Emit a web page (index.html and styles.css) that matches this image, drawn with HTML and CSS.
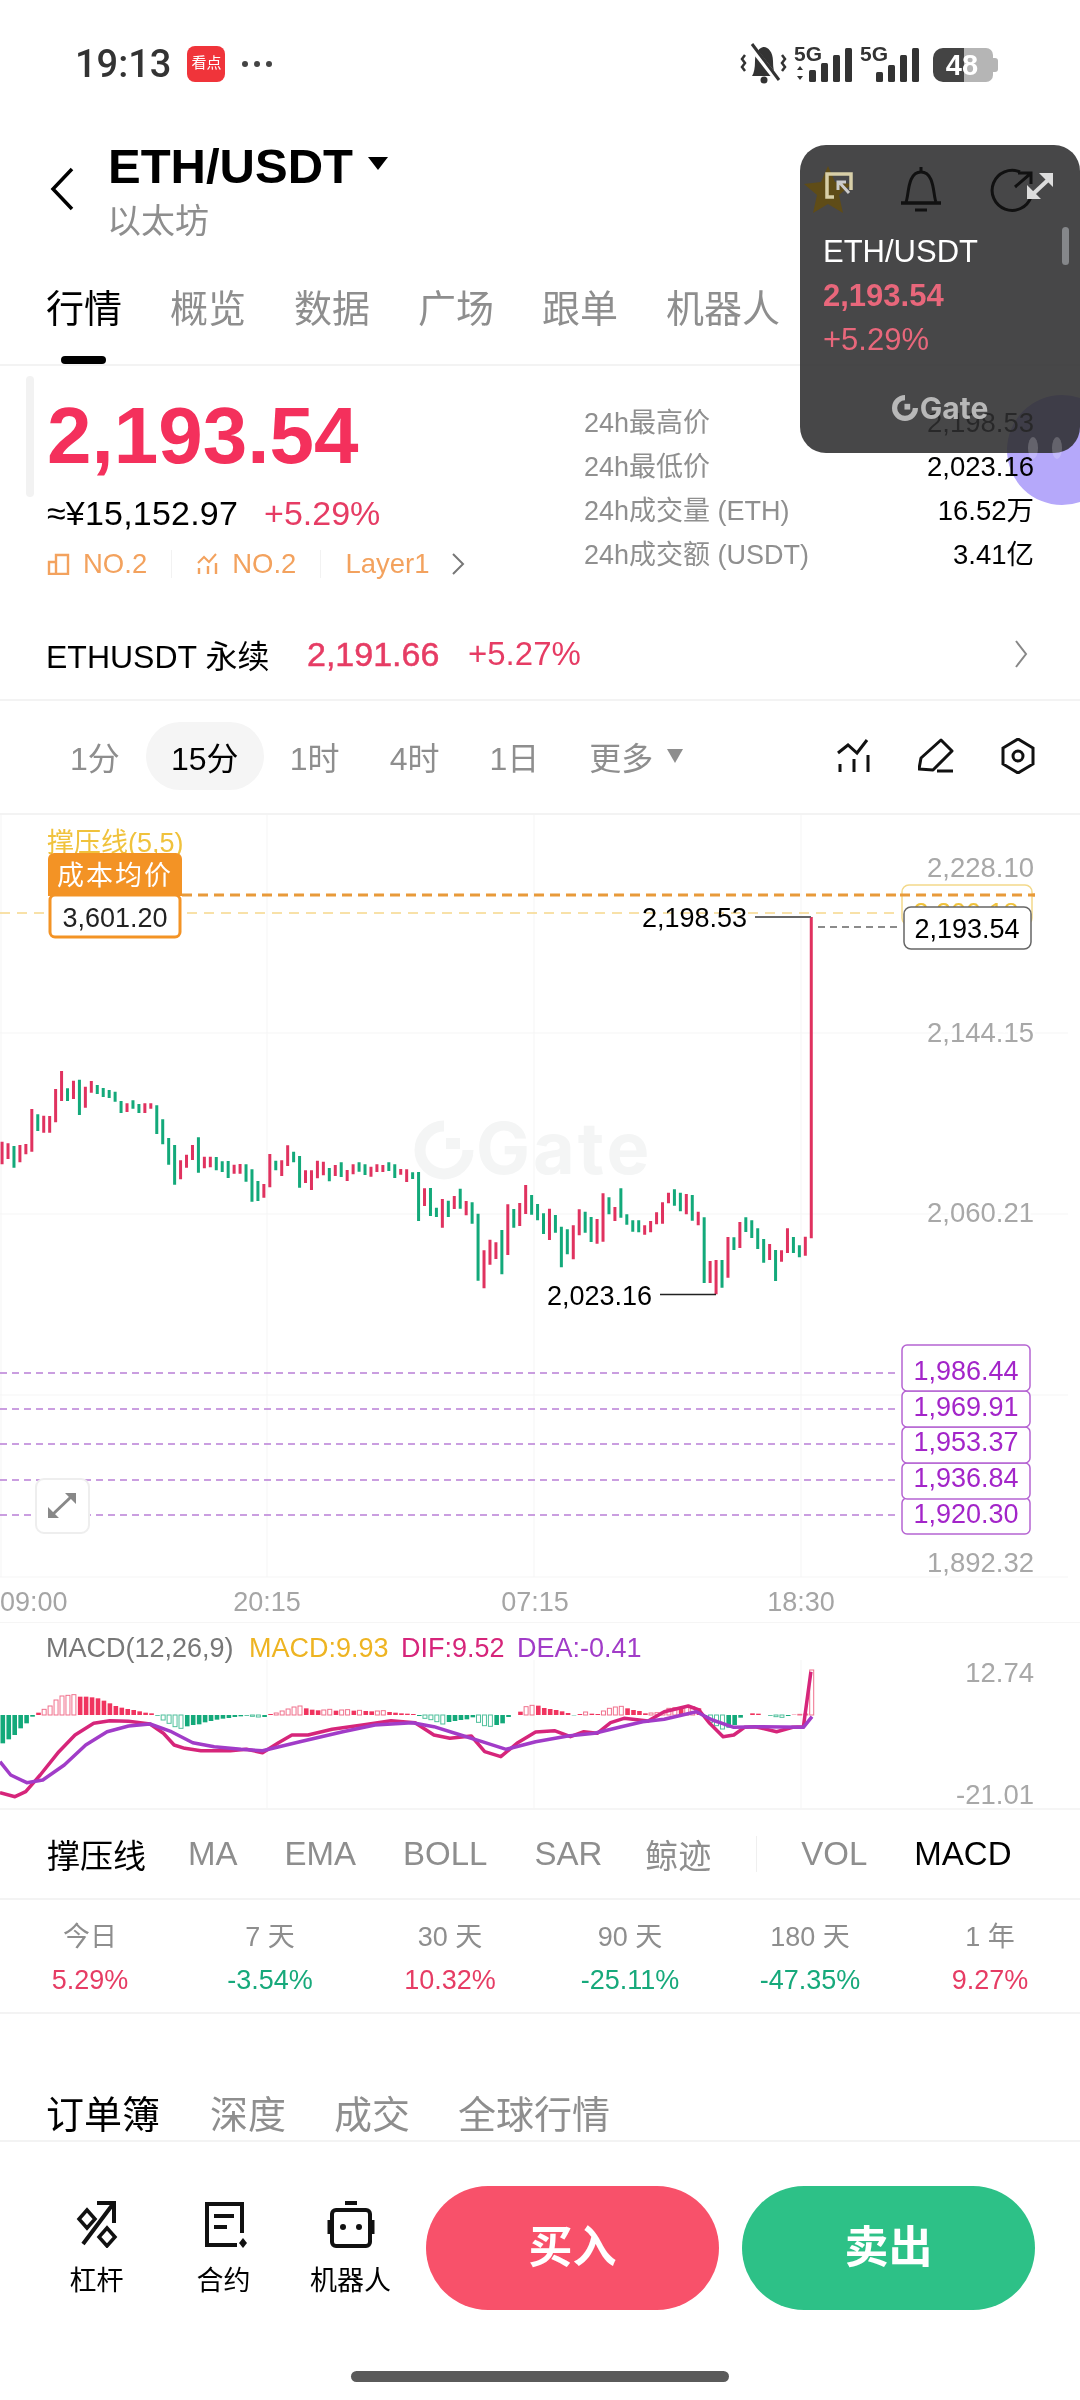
FILE: index.html
```html
<!DOCTYPE html>
<html lang="zh-CN">
<head>
    <meta charset="UTF-8">
    <meta name="viewport" content="width=device-width, initial-scale=1.0">
    <title>ETH/USDT</title>
    <link rel="stylesheet" href="styles.css">
</head>
<body>
<div class="page">
    <div class="status">
        <span class="clock">19:13</span>
        <span class="app-badge">看点</span>
        <span class="status-dots"><i></i><i></i><i></i></span>
        <svg class="status-right" viewBox="740 40 260 48">
            <path d="M752 76c2-3 3-8 3-15 0-9 5-14 9-14s9 5 9 14c0 7 1 12 3 15z" fill="#333"/>
            <circle cx="764" cy="80" r="3.5" fill="#333"/>
            <path d="M750 45l29 37" stroke="#fff" stroke-width="6"/>
            <path d="M752 44l27 36" stroke="#333" stroke-width="3"/>
            <path d="M745 55l-3 4 3 4-3 4 3 4M782 55l3 4-3 4 3 4-3 4" fill="none" stroke="#333" stroke-width="2.5"/>
            <text class="five-g" x="794" y="61">5G</text>
            <path d="M797 70l3-4 3 4zM797 76l3 4 3-4z" fill="#333"/>
            <g fill="#333">
                <rect x="809" y="70" width="7" height="12" rx="1.5"/>
                <rect x="821" y="63" width="7" height="19" rx="1.5"/>
                <rect x="833" y="55" width="7" height="27" rx="1.5"/>
                <rect x="845" y="48" width="7" height="34" rx="1.5"/>
            </g>
            <text class="five-g" x="860" y="61">5G</text>
            <g fill="#333">
                <rect x="876" y="72" width="7" height="10" rx="1.5"/>
                <rect x="888" y="65" width="7" height="17" rx="1.5"/>
                <rect x="900" y="55" width="7" height="27" rx="1.5"/>
                <rect x="912" y="48" width="7" height="34" rx="1.5"/>
            </g>
            <path d="M943 48h43a7 7 0 0 1 7 7v20a7 7 0 0 1-7 7h-43z" fill="#b5b5b5"/>
            <path d="M993 58h2a3 3 0 0 1 3 3v8a3 3 0 0 1-3 3h-2z" fill="#b5b5b5"/>
            <path d="M964 48h-21a10 10 0 0 0-10 10v14a10 10 0 0 0 10 10h21z" fill="#444"/>
            <text class="battery-num" x="962" y="75">48</text>
        </svg>
    </div>

    <div class="header">
        <svg class="back" viewBox="0 0 24 44"><path d="M22 2L3 22l19 20" fill="none" stroke="#000" stroke-width="3.5"/></svg>
        <div>
            <div class="pair-row"><span class="pair">ETH/USDT</span><span class="caret"></span></div>
            <div class="pair-name">以太坊</div>
        </div>
    </div>

    <div class="tabs">
        <span class="tab active">行情</span>
        <span class="tab">概览</span>
        <span class="tab">数据</span>
        <span class="tab">广场</span>
        <span class="tab">跟单</span>
        <span class="tab">机器人</span>
    </div>

    <div class="quote">
        <div class="quote-left">
            <div class="price">2,193.54</div>
            <div class="price-sub"><span class="cny">≈¥15,152.97</span><span class="up">+5.29%</span></div>
            <div class="ranks">
                <svg class="rank-icon" viewBox="0 0 24 22"><path d="M2 21V9h7v12zM9 21V2h12v19z" fill="none" stroke="#f3a25e" stroke-width="2.4"/></svg>
                <span>NO.2</span>
                <i class="rank-sep"></i>
                <svg class="rank-icon" viewBox="0 0 24 22"><path d="M2 10l6-6 5 5 7-8" fill="none" stroke="#f3a25e" stroke-width="2"/><path d="M3 21v-6M12 21v-8M20 21v-11" stroke="#f3a25e" stroke-width="2.4"/></svg>
                <span>NO.2</span>
                <i class="rank-sep"></i>
                <span>Layer1</span>
                <svg class="rank-more" viewBox="0 0 14 24"><path d="M2 2l10 10L2 22" fill="none" stroke="#777" stroke-width="2"/></svg>
            </div>
        </div>
        <div class="stats">
            <div class="stat"><span>24h最高价</span><b>2,198.53</b></div>
            <div class="stat"><span>24h最低价</span><b>2,023.16</b></div>
            <div class="stat"><span>24h成交量 (ETH)</span><b>16.52万</b></div>
            <div class="stat"><span>24h成交额 (USDT)</span><b>3.41亿</b></div>
        </div>
    </div>

    <div class="perp">
        <span class="perp-name">ETHUSDT 永续</span>
        <span class="perp-price">2,191.66</span>
        <span class="perp-pct">+5.27%</span>
        <svg class="perp-more" viewBox="0 0 14 30"><path d="M2 2l10 13L2 28" fill="none" stroke="#888" stroke-width="2"/></svg>
    </div>

    <div class="periods">
        <span class="period p1">1分</span>
        <span class="period p15">15分</span>
        <span class="period">1时</span>
        <span class="period">4时</span>
        <span class="period">1日</span>
        <span class="period more">更多<i class="more-caret"></i></span>
        <div class="tools">
            <svg viewBox="0 0 36 36"><path d="M2 15l10-8 9 8 10-13" fill="none" stroke="#111" stroke-width="3"/><path d="M4 34v-8M18 34v-13M32 34V17" stroke="#111" stroke-width="3"/></svg>
            <svg viewBox="0 0 36 36"><path d="M1 31l2-11L23 2l11 11-19 19z" fill="none" stroke="#111" stroke-width="3" stroke-linejoin="round"/><path d="M19 33h16" stroke="#111" stroke-width="3"/></svg>
            <svg viewBox="0 0 36 36"><path d="M18 1l15 9v16l-15 9-15-9V10z" fill="none" stroke="#111" stroke-width="3"/><circle cx="18" cy="18" r="5" fill="none" stroke="#111" stroke-width="3"/></svg>
        </div>
    </div>

    <svg class="chart" viewBox="0 815 1080 808">
        <g class="grid">
            <path d="M1 815V1577M267 815V1577M534 815V1577M801 815V1577"/>
            <path d="M0 1033H1068M0 1214H1068M0 1395H1068M0 1577H1068"/>
            <path d="M0 1622.5H1080"/>
        </g>
        <g class="watermark">
            <path d="M444 1126A24 24 0 1 0 468 1150" fill="none" stroke="#f4f5f5" stroke-width="11"/>
            <rect x="446" y="1138" width="14" height="11" fill="#f4f5f5"/>
            <text x="476" y="1174">Gate</text>
        </g>
        <path id="candles-up" class="candle-up"/>
        <path id="candles-down" class="candle-down"/>

        <text class="legend-yellow" x="47" y="852">撑压线(5,5)</text>
        <path class="dash-yellow" d="M0 913H900"/>
        <path class="dash-orange" d="M182 895H1035"/>
        <rect class="ytag" x="902" y="885" width="130" height="40" rx="7"/>
        <text class="ytag-text" x="966" y="922">2,200.18</text>
        <path class="dash-orange" d="M900 895H1035"/>

        <text class="axis" x="1034" y="877">2,228.10</text>
        <text class="axis" x="1034" y="1042">2,144.15</text>
        <text class="axis" x="1034" y="1222">2,060.21</text>
        <text class="axis" x="1034" y="1572">1,892.32</text>

        <text class="mark" x="642" y="927">2,198.53</text>
        <path class="mark-line" d="M755 917H811"/>
        <text class="mark" x="547" y="1305">2,023.16</text>
        <path class="mark-line-dark" d="M660 1294.5H716"/>

        <path class="dash-last" d="M818 927H900"/>
        <rect class="last-tag" x="904" y="907" width="127" height="42" rx="7"/>
        <text class="last-text" x="967" y="938">2,193.54</text>

        <path class="cost-head" d="M48 896v-37a6 6 0 0 1 6-6h122a6 6 0 0 1 6 6v37z"/>
        <text class="cost-title" x="115" y="885">成本均价</text>
        <rect class="cost-body" x="50" y="895" width="130" height="42" rx="5"/>
        <text class="cost-value" x="115" y="927">3,601.20</text>

        <g class="dash-purple">
            <path d="M0 1373H900M0 1409H900M0 1444H900M0 1480H900M0 1515H900"/>
        </g>
        <g class="ptags">
            <rect x="902" y="1498" width="128" height="36" rx="5"/>
            <rect x="902" y="1463" width="128" height="36" rx="5"/>
            <rect x="902" y="1427" width="128" height="36" rx="5"/>
            <rect x="902" y="1391" width="128" height="36" rx="5"/>
            <rect x="902" y="1345" width="128" height="46" rx="5"/>
        </g>
        <g class="ptexts">
            <text x="966" y="1380">1,986.44</text>
            <text x="966" y="1416">1,969.91</text>
            <text x="966" y="1451">1,953.37</text>
            <text x="966" y="1487">1,936.84</text>
            <text x="966" y="1523">1,920.30</text>
        </g>

        <rect class="expand" x="36" y="1479" width="53" height="54" rx="8"/>
        <path d="M51 1516L73 1495" stroke="#888" stroke-width="3"/>
        <path d="M76 1493v11l-11-11zM48 1518v-11l11 11z" fill="#888"/>

        <g class="times">
            <text x="0" y="1611">09:00</text>
            <text class="mid" x="267" y="1611">20:15</text>
            <text class="mid" x="535" y="1611">07:15</text>
            <text class="mid" x="801" y="1611">18:30</text>
        </g>
    </svg>

    <svg class="macd" viewBox="0 1623 1080 185">
        <path class="grid-line" d="M267 1660V1808M534 1660V1808M801 1660V1808"/>
        <text class="macd-legend" y="1657">
            <tspan class="l-gray" x="46">MACD(12,26,9)</tspan>
            <tspan class="l-yellow" x="249">MACD:9.93</tspan>
            <tspan class="l-pink" x="401">DIF:9.52</tspan>
            <tspan class="l-purple" x="517">DEA:-0.41</tspan>
        </text>
        <g id="histogram"></g>
        <path id="dif-line" class="dif"/>
        <path id="dea-line" class="dea"/>
        <text class="axis" x="1034" y="1682">12.74</text>
        <text class="axis" x="1034" y="1804">-21.01</text>
    </svg>

    <div class="indicators">
        <span class="ind on first">撑压线</span>
        <span class="ind">MA</span>
        <span class="ind">EMA</span>
        <span class="ind">BOLL</span>
        <span class="ind sar">SAR</span>
        <span class="ind">鲸迹</span>
        <i class="ind-sep"></i>
        <span class="ind">VOL</span>
        <span class="ind on">MACD</span>
    </div>

    <div class="returns">
        <div class="ret"><span>今日</span><b class="up">5.29%</b></div>
        <div class="ret"><span>7 天</span><b class="down">-3.54%</b></div>
        <div class="ret"><span>30 天</span><b class="up">10.32%</b></div>
        <div class="ret"><span>90 天</span><b class="down">-25.11%</b></div>
        <div class="ret"><span>180 天</span><b class="down">-47.35%</b></div>
        <div class="ret"><span>1 年</span><b class="up">9.27%</b></div>
    </div>

    <div class="book-tabs">
        <span class="on">订单簿</span>
        <span>深度</span>
        <span>成交</span>
        <span>全球行情</span>
    </div>

    <div class="actions">
        <div class="action">
            <svg viewBox="0 0 48 48"><path d="M10 44L40 4M24 3h17v20" fill="none" stroke="#111" stroke-width="4"/><path d="M14 10l8 9-8 9-8-9zM34 28l8 9-8 9-8-9z" fill="none" stroke="#111" stroke-width="3.5"/></svg>
            <span>杠杆</span>
        </div>
        <div class="action">
            <svg viewBox="0 0 48 48"><path d="M42 33V4H7v41h30" fill="none" stroke="#111" stroke-width="4"/><path d="M14 16h20M14 27h13" stroke="#111" stroke-width="4"/><path d="M43 38l4 5-4 5-4-5z" fill="#111"/></svg>
            <span>合约</span>
        </div>
        <div class="action">
            <svg viewBox="0 0 48 48"><rect x="5" y="10" width="38" height="36" rx="4" fill="none" stroke="#111" stroke-width="4"/><path d="M18 3h12" stroke="#111" stroke-width="4"/><path d="M2 20v14M46 20v14" stroke="#111" stroke-width="3"/><circle cx="16" cy="27" r="3" fill="#111"/><circle cx="32" cy="27" r="3" fill="#111"/></svg>
            <span>机器人</span>
        </div>
        <div class="trade buy">买入</div>
        <div class="trade sell">卖出</div>
    </div>

    <div class="home-bar"></div>

    <svg class="blob" viewBox="0 0 73 110"><circle cx="55" cy="55" r="55" fill="#b5a8fa"/></svg>

    <div class="float-win">
        <svg class="float-icons" viewBox="800 145 280 85">
            <path d="M828 166l7 16 17 2-13 11 4 18-15-9-15 9 4-18-13-11 17-2z" fill="#5f4c17"/>
            <path d="M834 197h-7v-23h24v16" fill="none" stroke="#d8cfa8" stroke-width="3.5"/>
            <path d="M839 182l10 11M838 190v-8h8" fill="none" stroke="#ccc" stroke-width="3"/>
            <path d="M906 202c3-6 1-30 15-30s12 24 15 30" fill="none" stroke="#111" stroke-width="3"/>
            <path d="M901 203h40" stroke="#111" stroke-width="3.5"/>
            <path d="M915 210h12" stroke="#111" stroke-width="3"/>
            <path d="M921 172v-5" stroke="#111" stroke-width="3"/>
            <path d="M1020 172A20 20 0 1 0 1031 197" fill="none" stroke="#111" stroke-width="3"/>
            <path d="M1015 187l15-13M1018 173h13v11" fill="none" stroke="#111" stroke-width="3"/>
            <path d="M1033 194l15-14" stroke="#ddd" stroke-width="4"/>
            <path d="M1053 173v14l-14-14zM1027 199v-14l14 14z" fill="#ddd"/>
        </svg>
        <div class="float-pair">ETH/USDT</div>
        <div class="float-price">2,193.54</div>
        <div class="float-pct">+5.29%</div>
        <div class="float-logo">
            <svg viewBox="0 0 100 100"><path d="M50 10A40 40 0 1 0 90 50" fill="none" stroke="#b8b8b8" stroke-width="20"/><rect x="48" y="34" width="22" height="22" fill="#b8b8b8"/></svg>
            <span>Gate</span>
        </div>
        <i class="float-scroll"></i>
    </div>
    <svg class="blob-eyes" viewBox="0 0 40 22"><ellipse cx="5" cy="11" rx="5" ry="11" fill="#fff" opacity=".2"/><ellipse cx="29" cy="11" rx="5" ry="11" fill="#fff" opacity=".2"/></svg>
</div>
<script src="chart.js"></script>
</body>
</html>
```

FILE: styles.css
```css
* {
    box-sizing: border-box;
}
body {
    margin: 0;
    background: #fff;
    font-family: "Liberation Sans", "Noto Sans CJK SC", sans-serif;
    color: #000;
}
i {
    font-style: normal;
}
.page {
    position: relative;
    width: 1080px;
    height: 2400px;
    overflow: hidden;
    background: #fff;
}

/* status bar */
.status {
    height: 128px;
    display: flex;
    align-items: center;
    padding-left: 75px;
}
.clock {
    font-family: Roboto, sans-serif;
    font-size: 38px;
    font-weight: 500;
    color: #333;
}
.app-badge {
    width: 38px;
    height: 36px;
    margin-left: 16px;
    border-radius: 8px;
    background: #f0343a;
    color: #fff;
    font-size: 15px;
    line-height: 34px;
    text-align: center;
}
.status-dots {
    display: flex;
    gap: 6px;
    margin-left: 17px;
}
.status-dots i {
    width: 6px;
    height: 6px;
    border-radius: 50%;
    background: #444;
}
.status-right {
    width: 260px;
    height: 48px;
    margin-left: auto;
    margin-right: 80px;
}
.five-g {
    font-size: 21px;
    font-weight: bold;
    fill: #333;
}
.battery-num {
    font-size: 29px;
    font-weight: bold;
    fill: #fff;
    text-anchor: middle;
}

/* header */
.header {
    height: 112px;
    display: flex;
    padding: 13px 0 0 50px;
}
.back {
    width: 24px;
    height: 44px;
    margin: 26px 34px 0 0;
}
.pair-row {
    display: flex;
    align-items: center;
    height: 50px;
}
.pair {
    font-size: 49px;
    font-weight: bold;
}
.caret {
    width: 0;
    height: 0;
    margin: -6px 0 0 15px;
    border-left: 10px solid transparent;
    border-right: 10px solid transparent;
    border-top: 13px solid #000;
}
.pair-name {
    margin-top: 10px;
    margin-left: -1px;
    font-size: 34px;
    line-height: 40px;
    color: #8e8e8e;
}

/* tabs */
.tabs {
    height: 126px;
    display: flex;
    gap: 48px;
    padding: 47px 0 0 46px;
    border-bottom: 2px solid #f3f3f3;
    font-size: 38px;
    line-height: 44px;
    color: #8e8e8e;
}
.tab {
    position: relative;
}
.tab.active {
    color: #000;
}
.tab.active::after {
    content: "";
    position: absolute;
    left: 15px;
    top: 69px;
    width: 45px;
    height: 8px;
    border-radius: 4px;
    background: #000;
}

/* quote */
.quote {
    position: relative;
    height: 245px;
    display: flex;
    padding: 30px 46px 0 47px;
}
.quote::before {
    content: "";
    position: absolute;
    left: 26px;
    top: 10px;
    width: 8px;
    height: 121px;
    border-radius: 4px;
    background: #f2f2f2;
}
.quote-left {
    width: 537px;
}
.price {
    font-size: 80px;
    font-weight: bold;
    line-height: 80px;
    color: #f4305c;
}
.price-sub {
    display: flex;
    gap: 26px;
    margin-top: 17px;
    font-size: 34px;
    line-height: 40px;
}
.cny {
    letter-spacing: .2px;
}
.up {
    color: #e63c64;
}
.down {
    color: #17a97b;
}
.ranks {
    display: flex;
    align-items: center;
    margin-top: 16px;
    font-size: 27.5px;
    line-height: 30px;
    color: #f3a25e;
}
.rank-icon {
    width: 24px;
    height: 22px;
    margin-right: 12px;
}
.rank-sep {
    width: 1px;
    height: 28px;
    margin: 0 24px;
    background: #f2f2f2;
}
.rank-more {
    width: 14px;
    height: 24px;
    margin-left: 22px;
}
.stats {
    flex: 1;
    margin-top: 5px;
}
.stat {
    display: flex;
    justify-content: space-between;
    height: 44px;
    font-size: 27px;
    line-height: 44px;
    color: #8f8f8f;
}
.stat b {
    font-weight: normal;
    font-size: 27.5px;
    color: #000;
}

/* perpetual row */
.perp {
    height: 90px;
    display: flex;
    align-items: center;
    padding: 0 52px 2px 46px;
    border-bottom: 2px solid #f3f3f3;
    font-size: 32px;
}
.perp-name {
    width: 261px;
}
.perp-price {
    width: 161px;
    font-size: 34px;
    color: #e63c64;
    -webkit-text-stroke: .5px #e63c64;
}
.perp-pct {
    font-size: 33px;
    color: #e63c64;
}
.perp-more {
    width: 14px;
    height: 30px;
    margin-left: auto;
}

/* time periods */
.periods {
    height: 114px;
    display: flex;
    align-items: center;
    padding: 0 44px 2px 70px;
    border-bottom: 2px solid #f3f3f3;
    font-size: 32px;
    color: #8e8e8e;
}
.period {
    margin-right: 50px;
}
.period.p15 {
    display: flex;
    align-items: center;
    justify-content: center;
    width: 118px;
    height: 68px;
    margin: 0 26px 0 -24px;
    border-radius: 34px;
    background: #f5f5f5;
    color: #000;
}
.period.p1 {
    margin-right: 50px;
}
.more {
    display: flex;
    align-items: center;
}
.more-caret {
    width: 0;
    height: 0;
    margin-left: 14px;
    border-left: 8px solid transparent;
    border-right: 8px solid transparent;
    border-top: 14px solid #8e8e8e;
}
.tools {
    display: flex;
    gap: 46px;
    margin-left: auto;
}
.tools svg {
    width: 36px;
    height: 36px;
}

/* main chart */
.chart,
.macd {
    display: block;
    width: 1080px;
    overflow: visible;
}
.chart {
    height: 808px;
    font-size: 27px;
}
.macd {
    height: 185px;
    font-size: 27px;
}
.grid path,
.grid-line {
    fill: none;
    stroke: #f5f5f5;
    stroke-width: 1;
}
.watermark text {
    font-family: Inter, sans-serif;
    font-size: 72px;
    font-weight: bold;
    letter-spacing: 3px;
    fill: #f4f5f5;
}
.candle-up {
    fill: none;
    stroke: #e0325f;
    stroke-width: 3;
}
.candle-down {
    fill: none;
    stroke: #13a97a;
    stroke-width: 3;
}
.legend-yellow {
    fill: #f0c23c;
}
.dash-yellow {
    stroke: #f6d88c;
    stroke-width: 1.5;
    stroke-dasharray: 10 7;
}
.dash-orange {
    stroke: #e89a3a;
    stroke-width: 3;
    stroke-dasharray: 10 6;
}
.ytag {
    fill: #fff;
    stroke: #f3d98a;
    stroke-width: 1.5;
}
.ytag-text {
    fill: #f0c23c;
    text-anchor: middle;
}
.axis {
    font-size: 27.5px;
    fill: #a8a8a8;
    text-anchor: end;
    stroke: #fff;
    stroke-width: 5;
    paint-order: stroke;
}
.mark {
    fill: #000;
}
.mark-line {
    stroke: #666;
    stroke-width: 2;
}
.mark-line-dark {
    stroke: #222;
    stroke-width: 1.5;
}
.dash-last {
    stroke: #666;
    stroke-width: 1.5;
    stroke-dasharray: 7 5;
}
.last-tag {
    fill: #fff;
    stroke: #666;
    stroke-width: 1.5;
}
.last-text {
    fill: #000;
    text-anchor: middle;
}
.cost-head {
    fill: #f39325;
}
.cost-title {
    fill: #fff;
    text-anchor: middle;
    letter-spacing: 2px;
}
.cost-body {
    fill: #fff;
    stroke: #f39325;
    stroke-width: 3;
}
.cost-value {
    fill: #222;
    text-anchor: middle;
}
.dash-purple path {
    stroke: #b97fd6;
    stroke-width: 1.5;
    stroke-dasharray: 7 5;
}
.ptags rect {
    fill: #fff;
    stroke: #b564d2;
    stroke-width: 1.5;
}
.ptexts text {
    fill: #a325c9;
    text-anchor: middle;
}
.expand {
    fill: #fff;
    stroke: #eee;
    stroke-width: 2;
}
.times text {
    fill: #a5a5a5;
}
.times .mid {
    text-anchor: middle;
}

/* macd */
.l-gray {
    fill: #777;
}
.l-yellow {
    fill: #eeb422;
}
.l-pink {
    fill: #d6257a;
}
.l-purple {
    fill: #a13cc8;
}
.dif,
.dea {
    fill: none;
    stroke-width: 3.5;
    stroke-linejoin: round;
}
.dif {
    stroke: #d6257a;
}
.dea {
    stroke: #a13cc8;
}
.bar-up {
    fill: #f0345f;
}
.bar-down {
    fill: #13a97a;
}
.bar-up-hollow {
    fill: #fff;
    stroke: #f0708c;
}
.bar-down-hollow {
    fill: #fff;
    stroke: #4fc09c;
}

/* indicator tabs */
.indicators {
    height: 92px;
    display: flex;
    align-items: center;
    gap: 47px;
    padding: 1px 0 1px 47px;
    border-top: 2px solid #f5f5f5;
    border-bottom: 2px solid #f3f3f3;
    font-size: 33px;
    color: #8e8e8e;
}
.ind.first {
    margin-right: -5px;
}
.ind.sar {
    margin-right: -4px;
}
.ind.on {
    color: #000;
}
.ind-sep {
    width: 1px;
    height: 36px;
    margin: 0 -3px 0 -2px;
    background: #efefef;
}

/* returns */
.returns {
    height: 114px;
    display: grid;
    grid-template-columns: repeat(6, 180px);
    padding-top: 22px;
    border-bottom: 2px solid #f3f3f3;
    text-align: center;
    font-size: 27px;
    line-height: 30px;
}
.ret span {
    display: block;
    color: #8e8e8e;
}
.ret b {
    display: block;
    margin-top: 13px;
    font-weight: normal;
}

/* order book tabs */
.book-tabs {
    height: 128px;
    display: flex;
    gap: 48px;
    padding: 78px 0 0 46px;
    border-bottom: 2px solid #f3f3f3;
    font-size: 38px;
    line-height: 46px;
    color: #8e8e8e;
}
.book-tabs .on {
    margin-right: 2px;
    color: #000;
}

/* bottom bar */
.actions {
    display: flex;
    padding: 44px 0 0 33px;
}
.action {
    width: 127px;
    display: flex;
    flex-direction: column;
    align-items: center;
    gap: 16px;
    padding-top: 14px;
    font-size: 27px;
    line-height: 34px;
}
.action svg {
    width: 48px;
    height: 48px;
}
.trade {
    width: 293px;
    height: 124px;
    margin-left: 12px;
    border-radius: 62px;
    color: #fff;
    font-size: 44px;
    font-weight: bold;
    line-height: 124px;
    text-align: center;
}
.trade.buy {
    background: #f8516a;
}
.trade.sell {
    margin-left: 23px;
    background: #2dc187;
}
.home-bar {
    width: 378px;
    height: 11px;
    margin: 61px auto 0;
    border-radius: 6px;
    background: #5a5a5a;
}

/* floating price window, lies over the page */
.blob {
    position: absolute;
    left: 1007px;
    top: 395px;
    width: 73px;
    height: 110px;
    mix-blend-mode: multiply;
}
.float-win {
    position: absolute;
    left: 800px;
    top: 145px;
    width: 280px;
    height: 308px;
    border-radius: 26px;
    background: rgba(45, 46, 47, .88);
}
.float-icons {
    display: block;
    width: 280px;
    height: 85px;
}
.float-pair,
.float-price,
.float-pct {
    padding-left: 23px;
    font-size: 31px;
    line-height: 44px;
}
.float-pair {
    color: #fff;
}
.float-price {
    font-weight: bold;
    color: #e8677b;
}
.float-pct {
    color: #e8677b;
}
.float-logo {
    display: flex;
    align-items: center;
    justify-content: center;
    gap: 2px;
    margin-top: 30px;
    font-family: Inter, sans-serif;
    font-size: 30px;
    font-weight: bold;
    line-height: 32px;
    color: #b8b8b8;
}
.float-logo svg {
    width: 26px;
    height: 26px;
}
.float-scroll {
    position: absolute;
    left: 262px;
    top: 82px;
    width: 7px;
    height: 38px;
    border-radius: 4px;
    background: #85878a;
}
.blob-eyes {
    position: absolute;
    left: 1028px;
    top: 437px;
    width: 40px;
    height: 22px;
}
```

FILE: chart.js
```js
// y values were read off the chart at 3x, so they get divided by 3 below
// [top, bottom, 1 = up candle]
var candles = [
    [335,403,1],[340,387,1],[348,413,0],[345,397,1],[342,373,1],[237,365,1],[253,303,0],[257,308,1],[258,308,1],[177,277,1],
    [123,213,1],[175,213,0],[152,207,1],[149,255,0],[170,233,1],[153,188,1],[165,192,0],[174,201,0],[180,204,0],[185,215,0],
    [213,249,0],[220,246,1],[211,236,0],[222,249,0],[220,249,1],[220,236,1],[226,312,0],[268,343,0],[324,404,0],[345,464,0],
    [391,448,1],[374,413,1],[345,390,1],[322,428,0],[380,415,1],[380,412,1],[381,421,0],[394,426,0],[393,444,0],[404,431,1],
    [402,431,1],[403,455,0],[418,515,0],[453,513,0],[462,503,1],[372,472,1],[392,421,0],[391,438,1],[346,408,1],[365,397,0],
    [378,473,0],[421,459,1],[421,480,1],[392,445,1],[395,436,1],[414,454,0],[405,438,1],[397,441,0],[420,453,1],[403,433,1],
    [397,425,0],[403,435,0],[410,440,1],[403,426,1],[405,426,1],[397,423,0],[403,444,0],[417,434,1],[418,456,1],[427,447,0],
    [426,573,0],[475,528,1],[474,558,0],[533,561,0],[507,593,1],[512,561,0],[498,537,1],[476,536,0],[513,556,1],[517,581,0],
    [551,752,0],[661,775,1],[629,704,1],[637,687,1],[600,733,0],[523,675,1],[537,593,0],[519,588,1],[465,552,1],[495,554,0],
    [522,571,0],
    [550,612,0],[536,630,1],[555,608,0],[590,712,0],[598,673,0],[586,688,1],[538,616,1],[545,608,0],[561,636,0],[567,641,1],
    [490,635,1],[502,553,0],[531,573,1],[475,563,0],[553,584,0],[571,605,0],[571,607,0],[586,614,1],[573,607,1],[547,583,1],
    [517,581,1],[488,520,1],[478,527,0],[488,544,0],[492,553,1],[495,572,0],[545,586,1],[562,759,0],[693,759,1],[690,793,1],
    [690,773,0],[621,743,1],[622,660,0],[576,654,1],[562,606,0],[571,624,0],[595,657,0],[627,698,0],[642,690,1],[660,753,0],
    [661,695,1],[595,669,1],[621,669,0],[646,682,0],[620,677,1],[-339,625,1]
];

var hist = [
    -85,-73,-60,-40,-25,-5,7,17,27,45,57,59,61,55,55,53,50,43,35,27,22,18,15,11,7,5,
    -2,-15,-25,-35,-40,-34,-30,-28,-22,-18,-14,-11,-9,-6,-4,-2,-4,-6,-6,3,6,12,18,24,27,
    20,16,14,15,17,13,15,16,13,14,12,11,12,13,9,7,5,4,3,-3,-10,-14,-20,-27,-21,-18,-15,-13,-7,
    -22,-32,-34,-30,-25,-6,0,10,25,29,28,21,18,15,11,6,-1,3,9,4,3,12,20,24,26,20,15,12,5,6,7,8,
    20,22,19,24,25,20,-6,-22,-32,-42,-38,-30,-8,0,5,4,0,-2,-5,-7,-3,1,2,3,135
];

var dif = [[0,518],[28,530],[48,515],[75,465],[110,395],[140,345],[175,310],[205,302],[240,304],[280,312],[305,340],[325,375],[345,385],[375,392],[430,392],[460,388],[490,398],[520,368],[545,345],[575,345],[620,328],[680,314],[730,302],[775,308],[810,345],[840,355],[880,348],[905,395],[935,410],[965,370],[1000,336],[1035,332],[1065,350],[1090,335],[1115,340],[1140,308],[1165,295],[1210,303],[1240,275],[1285,258],[1305,270],[1325,310],[1350,350],[1370,345],[1390,322],[1410,320],[1450,335],[1480,322],[1500,320],[1514,155]];
var dea = [[0,425],[20,465],[50,488],[80,480],[120,435],[160,375],[200,335],[240,318],[280,312],[320,335],[360,368],[400,380],[450,388],[490,392],[560,365],[640,335],[700,315],[770,308],[810,320],[860,345],[900,365],[945,388],[1000,365],[1060,348],[1110,340],[1160,320],[1200,305],[1240,298],[1300,275],[1330,300],[1370,322],[1420,320],[1500,322],[1516,290]];

var PITCH = 5.95;
var SVG_NS = "http://www.w3.org/2000/svg";

function drawCandles() {
    var up = "", down = "";
    candles.forEach(function (c, i) {
        var x = (2.07 + PITCH * i).toFixed(2);
        var seg = "M" + x + " " + (1030 + c[0] / 3).toFixed(1) + "V" + (1030 + c[1] / 3).toFixed(1);
        if (c[2]) up += seg; else down += seg;
    });
    document.getElementById("candles-up").setAttribute("d", up);
    document.getElementById("candles-down").setAttribute("d", down);
}

function drawHistogram() {
    var g = document.getElementById("histogram");
    var zero = 1715;
    hist.forEach(function (v, i) {
        if (v === 0) return;
        var h = Math.abs(v) / 3;
        var growing = i > 0 && Math.abs(v) > Math.abs(hist[i - 1]) && v * hist[i - 1] > 0;
        var r = document.createElementNS(SVG_NS, "rect");
        r.setAttribute("x", (0.5 + PITCH * i).toFixed(2));
        r.setAttribute("y", v > 0 ? zero - h : zero);
        r.setAttribute("width", growing ? 4 : 4.6);
        r.setAttribute("height", h);
        r.setAttribute("class", (v > 0 ? "bar-up" : "bar-down") + (growing ? "-hollow" : ""));
        g.appendChild(r);
    });
}

function linePath(points) {
    return points.map(function (p, i) {
        return (i ? "L" : "M") + (p[0] / 1.867).toFixed(1) + " " + (1620 + p[1] / 3).toFixed(1);
    }).join("");
}

drawCandles();
drawHistogram();
document.getElementById("dif-line").setAttribute("d", linePath(dif));
document.getElementById("dea-line").setAttribute("d", linePath(dea));
```
